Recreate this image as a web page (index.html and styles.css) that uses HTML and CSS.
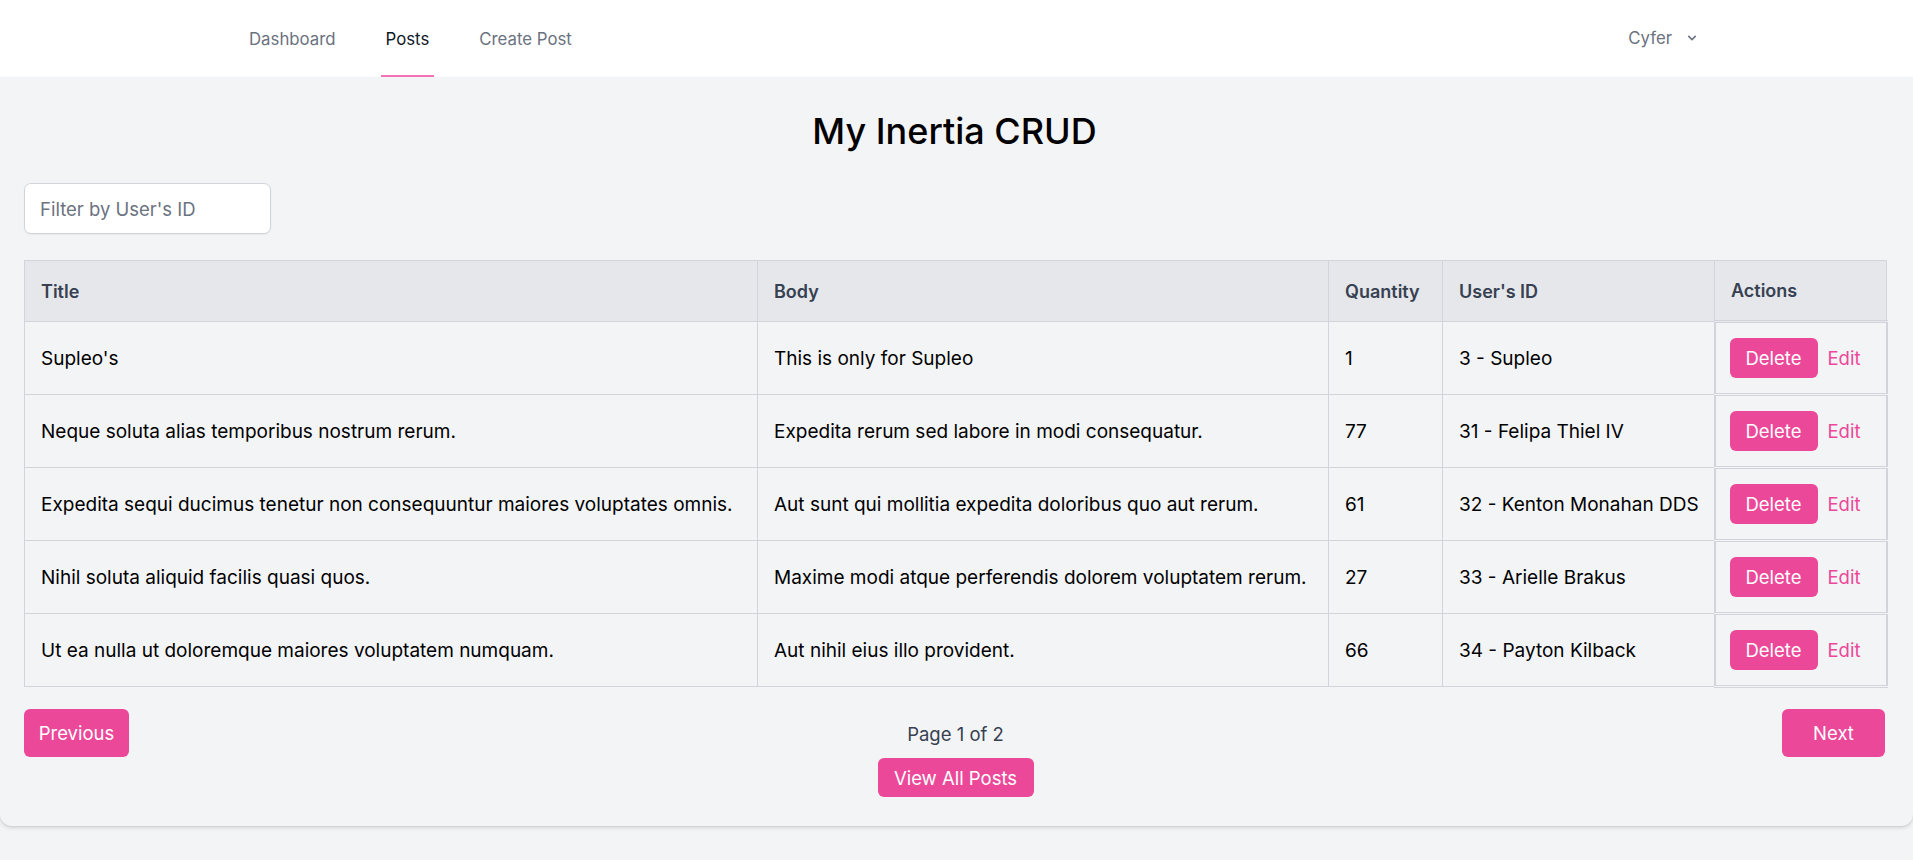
FILE: index.html
```html
<!DOCTYPE html>
<html lang="en">
<head>
<meta charset="utf-8">
<title>My Inertia CRUD</title>
<link rel="stylesheet" href="styles.css">
</head>
<body>
<nav class="topnav">
  <div class="nav-inner">
    <div class="nav-links">
      <a class="nav-link">Dashboard</a>
      <a class="nav-link active">Posts</a>
      <a class="nav-link">Create Post</a>
    </div>
    <div class="user-menu">
      <span>Cyfer</span>
      <svg class="chev" width="16" height="16" viewBox="0 0 20 20"><path fill="currentColor" d="M5.293 7.293a1 1 0 011.414 0L10 10.586l3.293-3.293a1 1 0 111.414 1.414l-4 4a1 1 0 01-1.414 0l-4-4a1 1 0 010-1.414z"/></svg>
    </div>
  </div>
</nav>
<main class="card">
  <h1 class="title">My Inertia CRUD</h1>
  <input class="filter" type="text" placeholder="Filter by User's ID">
  <table class="posts">
    <thead>
      <tr>
        <th class="c-title">Title</th>
        <th class="c-body">Body</th>
        <th class="c-qty">Quantity</th>
        <th class="c-user">User's ID</th>
        <th class="c-act">Actions</th>
      </tr>
    </thead>
    <tbody>
      <tr>
        <td>Supleo's</td>
        <td>This is only for Supleo</td>
        <td>1</td>
        <td>3 - Supleo</td>
        <td class="act"><div class="act-wrap"><button class="btn-del">Delete</button><a class="edit">Edit</a></div></td>
      </tr>
      <tr>
        <td>Neque soluta alias temporibus nostrum rerum.</td>
        <td>Expedita rerum sed labore in modi consequatur.</td>
        <td>77</td>
        <td>31 - Felipa Thiel IV</td>
        <td class="act"><div class="act-wrap"><button class="btn-del">Delete</button><a class="edit">Edit</a></div></td>
      </tr>
      <tr>
        <td>Expedita sequi ducimus tenetur non consequuntur maiores voluptates omnis.</td>
        <td>Aut sunt qui mollitia expedita doloribus quo aut rerum.</td>
        <td>61</td>
        <td>32 - Kenton Monahan DDS</td>
        <td class="act"><div class="act-wrap"><button class="btn-del">Delete</button><a class="edit">Edit</a></div></td>
      </tr>
      <tr>
        <td>Nihil soluta aliquid facilis quasi quos.</td>
        <td>Maxime modi atque perferendis dolorem voluptatem rerum.</td>
        <td>27</td>
        <td>33 - Arielle Brakus</td>
        <td class="act"><div class="act-wrap"><button class="btn-del">Delete</button><a class="edit">Edit</a></div></td>
      </tr>
      <tr>
        <td>Ut ea nulla ut doloremque maiores voluptatem numquam.</td>
        <td>Aut nihil eius illo provident.</td>
        <td>66</td>
        <td>34 - Payton Kilback</td>
        <td class="act"><div class="act-wrap"><button class="btn-del">Delete</button><a class="edit">Edit</a></div></td>
      </tr>
    </tbody>
  </table>
  <div class="pager">
    <button class="btn btn-prev">Previous</button>
    <div class="pager-mid">
      <span class="page-info">Page 1 of 2</span>
      <button class="btn btn-all">View All Posts</button>
    </div>
    <button class="btn btn-next">Next</button>
  </div>
</main>
</body>
</html>
```
FILE: styles.css
```css
* { box-sizing: border-box; }
html, body { margin: 0; padding: 0; }
body {
  background: #f3f4f6;
  font-family: "Inter", "Liberation Sans", sans-serif;
  color: #111827;
  width: 1913px;
  height: 860px;
  overflow: hidden;
}
.topnav {
  background: #ffffff;
  height: 77px;
}
.nav-inner {
  height: 100%;
  display: flex;
  justify-content: space-between;
  align-items: stretch;
  padding: 0 213px 0 244px;
}
.nav-links {
  display: flex;
  gap: 40px;
}
.nav-link {
  display: flex;
  align-items: center;
  padding: 0 5px;
  padding-top: 2px;
  font-size: 16.8px;
  color: #6b7280;
  border-bottom: 2px solid transparent;
}
.nav-link.active {
  color: #111827;
  border-bottom-color: #f472b6;
}
.user-menu {
  display: flex;
  align-items: center;
  gap: 12px;
  font-size: 16.8px;
  color: #6b7280;
  padding-bottom: 1px;
}
.chev { color: #6b7280; }
.card {
  background: #f3f4f6;
  padding: 26px 28px 29px 24px;
  border-radius: 0 0 12px 12px;
  box-shadow: 0 2px 4px rgba(0,0,0,0.12), 0 1px 2px rgba(0,0,0,0.06);
  display: flex;
  flex-direction: column;
}
.title {
  margin: 0;
  text-align: center;
  font-size: 36px;
  font-weight: 500;
  line-height: 56px;
  color: #000;
}
.filter {
  margin-top: 24px;
  width: 247px;
  height: 51px;
  border: 1px solid #d1d5db;
  border-radius: 7px;
  background: #fff;
  padding: 0 15px;
  font-family: inherit;
  font-size: 18.5px;
  box-shadow: 0 1px 2px rgba(0,0,0,0.05);
}
.filter::placeholder { color: #6b7280; }
.posts {
  margin-top: 26px;
  width: 100%;
  border-collapse: collapse;
  table-layout: fixed;
  font-size: 19px;
}
.posts th, .posts td {
  border: 1px solid #d1d5db;
  text-align: left;
  padding: 0 16px;
  white-space: nowrap;
}
.posts th {
  background: #e5e7eb;
  color: #374151;
  font-weight: 600;
  font-size: 18px;
  height: 61px;
}
.posts td {
  height: 73px;
  color: #000;
}
.c-title { width: 733px; }
.c-body { width: 571px; }
.c-qty { width: 114px; }
.c-user { width: 272px; }
.c-act { width: 172px; }
.posts td.act {
  border-top: 3px double #d1d5db;
  border-bottom: 3px double #d1d5db;
  border-left: 2px solid #d1d5db;
  border-right: 2px solid #d1d5db;
  padding: 0 14px;
}
.act-wrap {
  display: flex;
  align-items: center;
  gap: 10px;
}
.btn-del {
  background: #ec4899;
  color: #fff;
  border: none;
  border-radius: 6px;
  height: 40px;
  width: 88px;
  font-family: inherit;
  font-size: 18.5px;
}
.edit {
  color: #ec4899;
  font-size: 18.5px;
}
.pager {
  margin-top: 21px;
  display: flex;
  justify-content: space-between;
  align-items: flex-start;
}
.pager-mid {
  display: flex;
  flex-direction: column;
  align-items: center;
  gap: 10px;
  padding-top: 11px;
}
.page-info {
  font-size: 18.5px;
  color: #374151;
  line-height: 28px;
}
.btn {
  background: #ec4899;
  color: #fff;
  border: none;
  border-radius: 6px;
  font-family: inherit;
  font-size: 18.5px;
}
.btn-prev { width: 105px; height: 48px; }
.btn-next { width: 103px; height: 48px; }
.btn-all { width: 156px; height: 39px; }
```
